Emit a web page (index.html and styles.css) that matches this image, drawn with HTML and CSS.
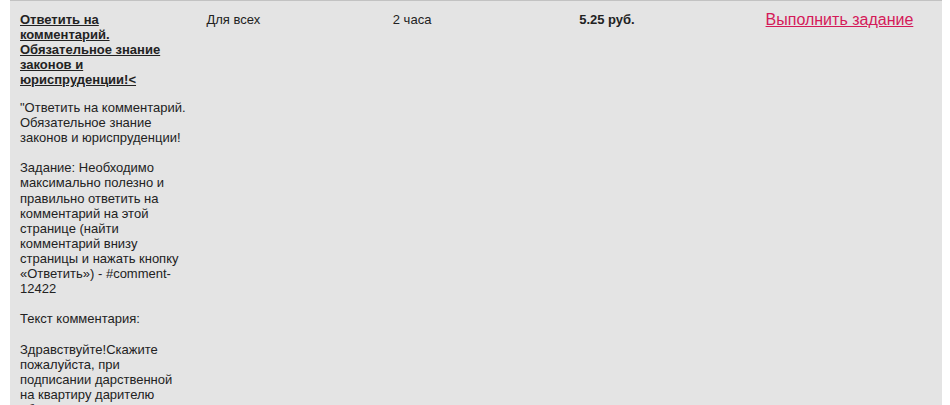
FILE: index.html
```html
<!DOCTYPE html>
<html lang="ru">
<head>
<meta charset="UTF-8">
<title>Задания</title>
<link rel="stylesheet" href="styles.css">
</head>
<body>
<table class="tasks">
    <tr>
        <td class="task-cell">
            <a href="#" class="task-title">Ответить на комментарий. Обязательное знание законов и юриспруденции!&lt;</a>
            <div class="task-text">
                "Ответить на комментарий. Обязательное знание законов и юриспруденции!<br><br>
                Задание: Необходимо максимально полезно и правильно ответить на комментарий на этой странице (найти комментарий внизу страницы и нажать кнопку «Ответить») - #comment-12422<br><br>
                Текст комментария:<br><br>
                Здравствуйте!Скажите пожалуйста, при подписании дарственной на квартиру дарителю обязательно ли присутствовать лично у нотариуса?"
            </div>
        </td>
        <td>Для всех</td>
        <td>2 часа</td>
        <td class="price">5.25 руб.</td>
        <td><a href="#" class="do-task">Выполнить задание</a></td>
    </tr>
</table>
</body>
</html>
```

FILE: styles.css
```css
body {
    margin: 0;
    padding: 0 8px 0 10px;
    background-color: #fff;
    font-family: "Liberation Sans", Arial, sans-serif;
    font-size: 13px;
    line-height: 15px;
    color: #222;
}
.tasks {
    width: 932px;
    table-layout: fixed;
    border-collapse: collapse;
    background-color: #e4e4e4;
    border-top: 1px solid #c2c2c2;
}
.tasks td {
    vertical-align: top;
    padding: 11px 10px 10px 10px;
}
.task-title {
    display: block;
    font-weight: bold;
    color: #222;
    text-decoration: underline;
    margin-bottom: 13px;
}
.task-text {
    line-height: 15.1px;
}
.price {
    font-weight: bold;
}
.do-task {
    font-size: 16px;
    line-height: 15px;
    color: #d41a59;
    text-decoration: underline;
}
```
